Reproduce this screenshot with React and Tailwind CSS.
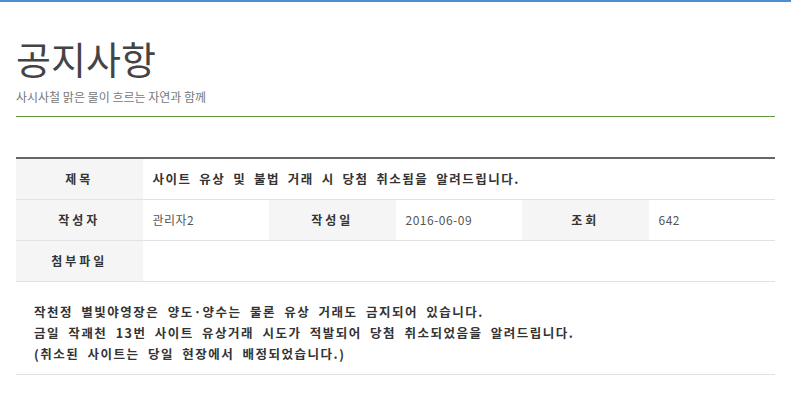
import React from "react";

const font = { fontFamily: '"Noto Sans CJK KR", "Noto Sans", sans-serif' };

function Label({ children }) {
  return (
    <div className="flex items-center justify-center bg-[#f5f5f5] text-[12px] font-bold tracking-[3px] text-[#333]">
      {children}
    </div>
  );
}

function Value({ children, span = "" }) {
  return (
    <div className={`flex items-center pl-[10px] text-[12px] tracking-[0.5px] text-[#555] ${span}`}>
      {children}
    </div>
  );
}

export default function App() {
  return (
    <div className="min-h-screen bg-white" style={font}>
      <div className="h-[2px] bg-[#4a8fd6]" />
      <div className="px-4">
        {/* Header */}
        <div className="border-b border-[#5f9640] pt-[30px] pb-[10px]">
          <h1 className="text-[38px] leading-[52px] text-[#444] font-normal">공지사항</h1>
          <p className="mt-[4px] text-[12px] leading-[18px] text-[#777]">
            사시사철 맑은 물이 흐르는 자연과 함께
          </p>
        </div>

        {/* Info table */}
        <div className="mt-[40px] border-t-2 border-[#666]">
          <div className="grid grid-cols-6 h-[41px] border-b border-[#e2e2e2]">
            <Label>제목</Label>
            <div className="col-span-5 flex items-center pl-[10px] text-[12.5px] font-bold tracking-[1.5px] [word-spacing:3.5px] text-[#333]">
              사이트 유상 및 불법 거래 시 당첨 취소됨을 알려드립니다.
            </div>
          </div>
          <div className="grid grid-cols-6 h-[41px] border-b border-[#e2e2e2]">
            <Label>작성자</Label>
            <Value>관리자2</Value>
            <Label>작성일</Label>
            <Value>2016-06-09</Value>
            <Label>조회</Label>
            <Value>642</Value>
          </div>
          <div className="grid grid-cols-6 h-[41px] border-b border-[#e2e2e2]">
            <Label>첨부파일</Label>
            <Value span="col-span-5" />
          </div>
        </div>

        {/* Body */}
        <div className="border-b border-[#e2e2e2] pl-[18px] pt-[19px] pb-[10px] text-[12.5px] font-bold leading-[21px] tracking-[1.5px] [word-spacing:4px] text-[#333]">
          <p>작천정 별빛야영장은 양도·양수는 물론 유상 거래도 금지되어 있습니다.</p>
          <p>금일 작괘천 13번 사이트 유상거래 시도가 적발되어 당첨 취소되었음을 알려드립니다.</p>
          <p>(취소된 사이트는 당일 현장에서 배정되었습니다.)</p>
        </div>
      </div>
    </div>
  );
}
